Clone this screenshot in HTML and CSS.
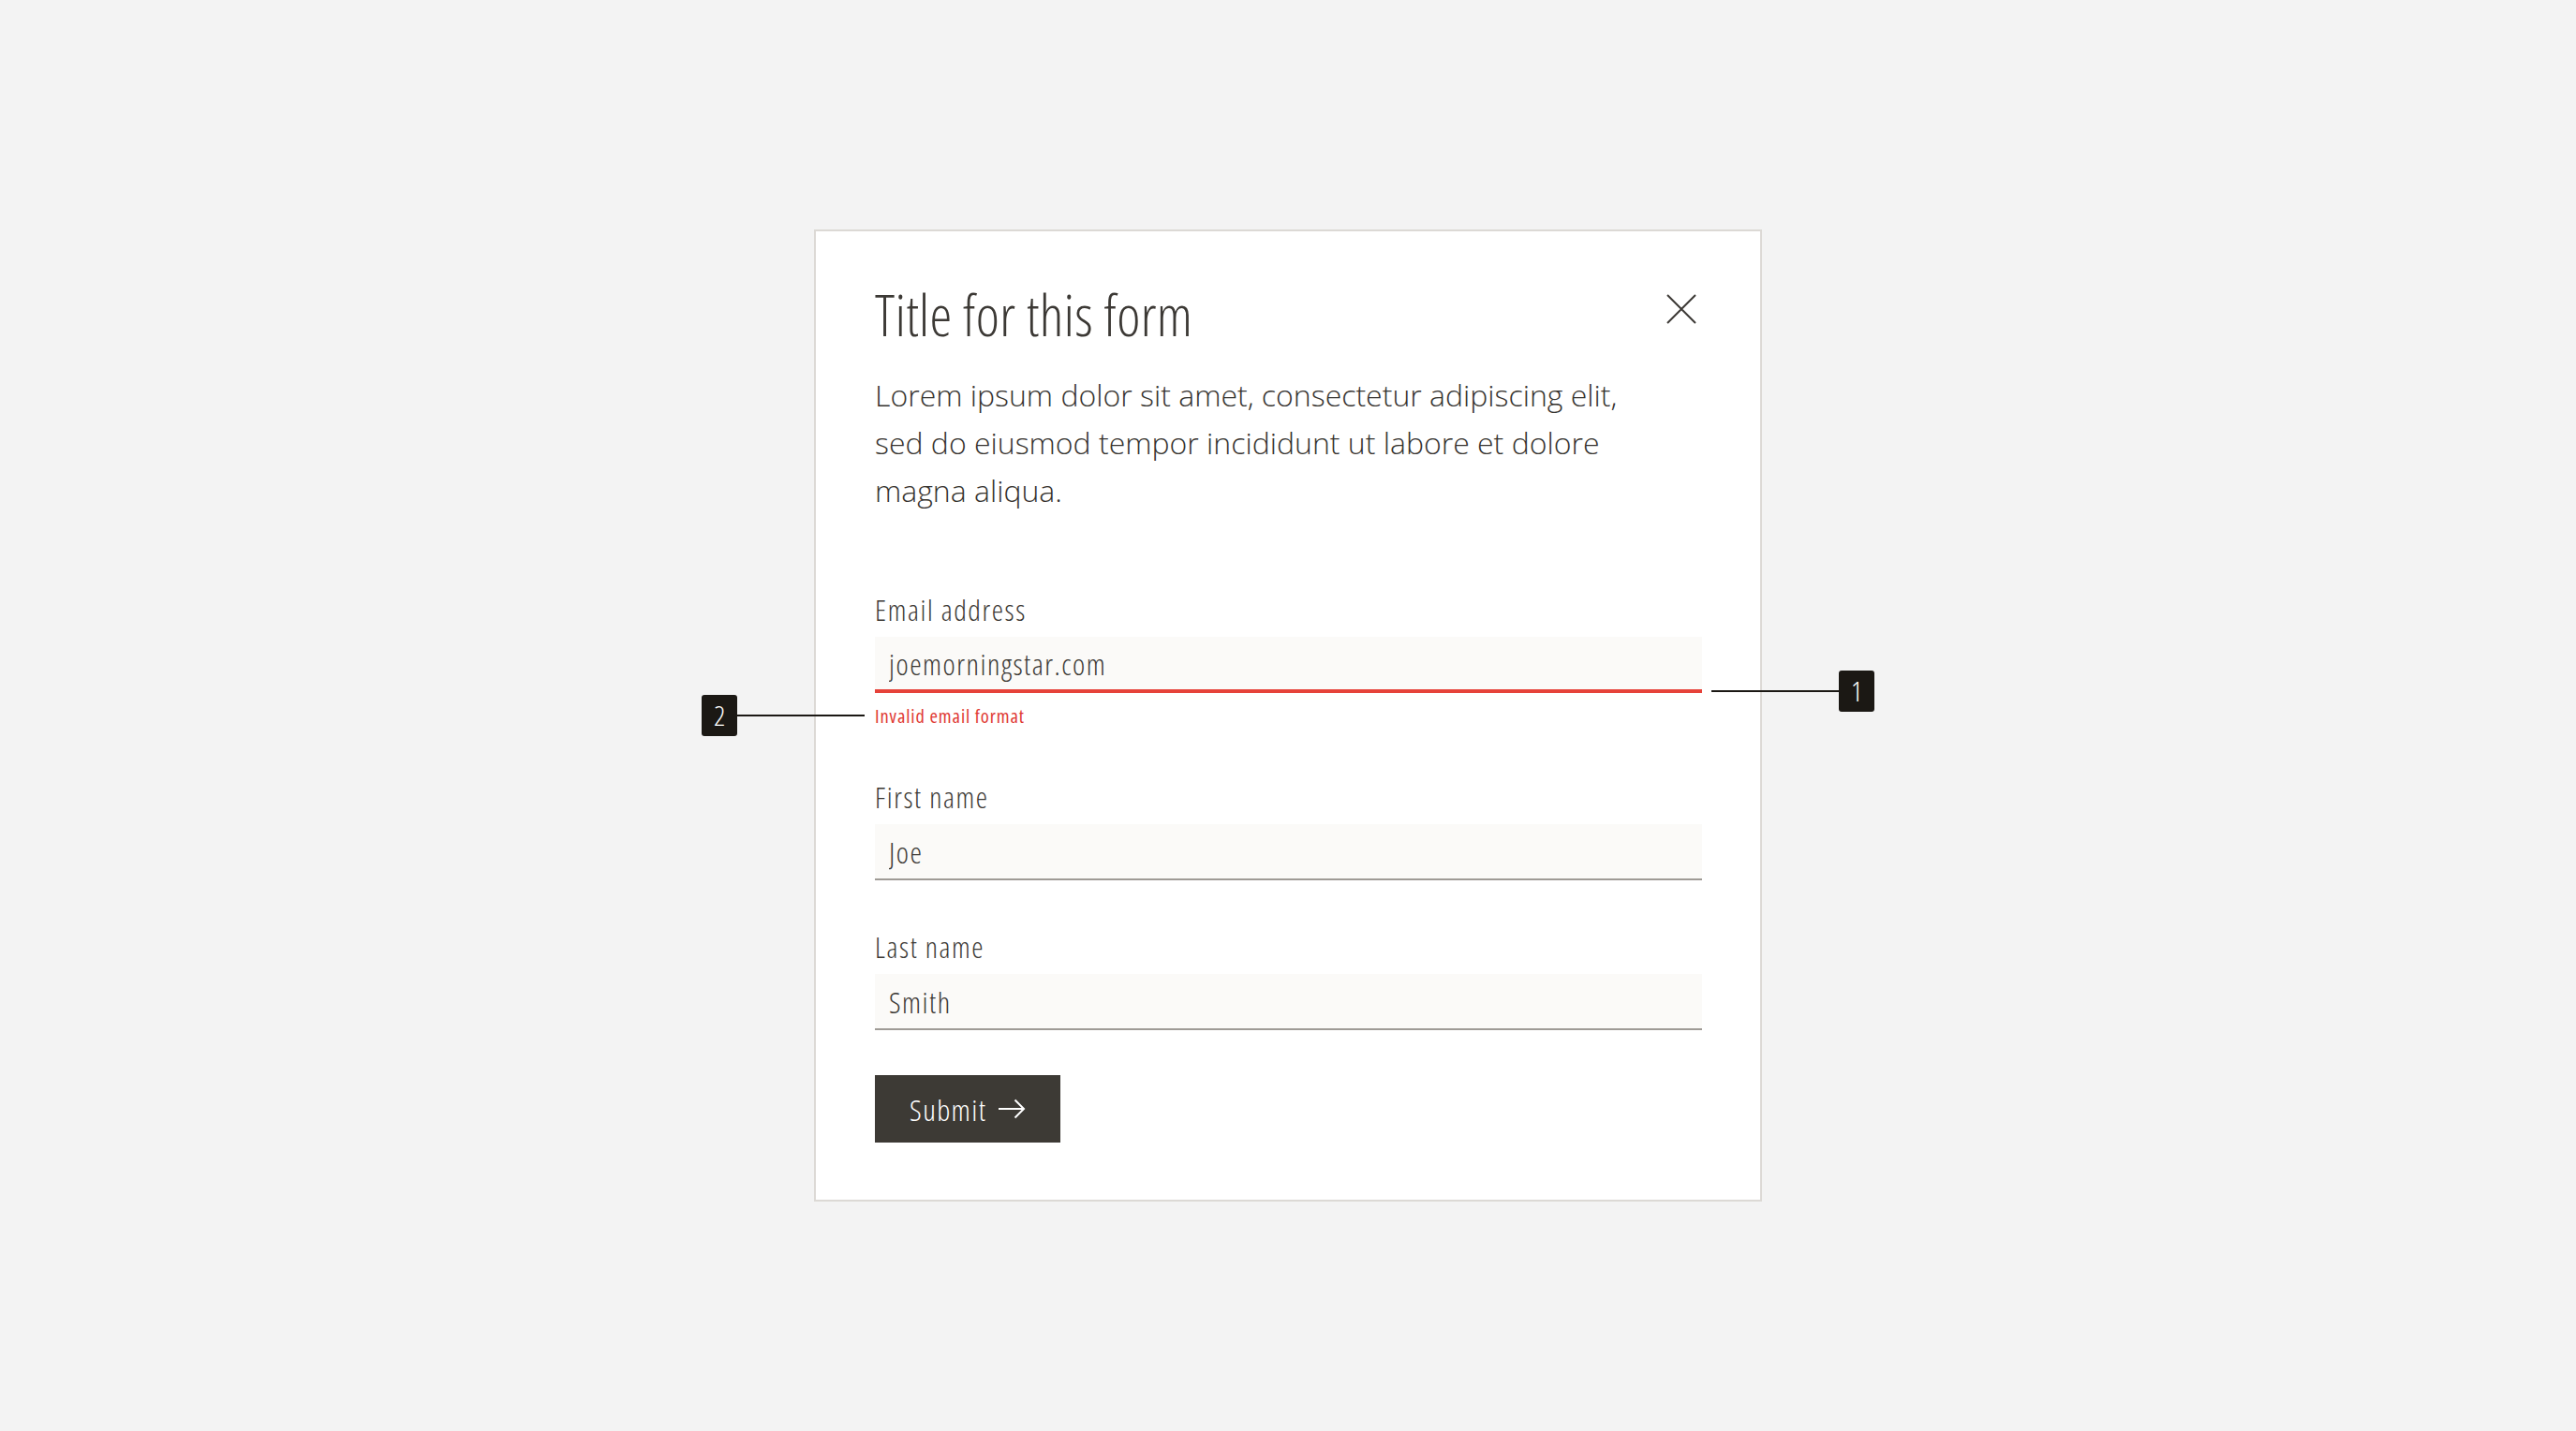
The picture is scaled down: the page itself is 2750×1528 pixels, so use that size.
FILE: index.html
```html
<!DOCTYPE html>
<html lang="en">
<head>
    <meta charset="UTF-8">
    <meta name="viewport" content="width=device-width, initial-scale=1.0">
    <title>Form with error</title>
    <link rel="stylesheet" href="styles.css">
</head>
<body>
    <div class="card">
        <div class="card-header">
            <h1 class="title">Title for this form</h1>
            <button class="close-btn" aria-label="Close">
                <svg width="32" height="32" viewBox="0 0 32 32">
                    <path d="M1 1 L31 31 M31 1 L1 31" stroke="#3c3935" stroke-width="2" fill="none"/>
                </svg>
            </button>
        </div>
        <p class="description">Lorem ipsum dolor sit amet, consectetur adipiscing elit, sed do eiusmod tempor incididunt ut labore et dolore magna aliqua.</p>

        <form class="form" onsubmit="return false">
            <div class="fields">
                <div class="field">
                    <label class="label" for="email">Email address</label>
                    <div class="input-wrap">
                        <input class="input input-error" id="email" type="text" value="joemorningstar.com">
                        <div class="marker marker-right">
                            <span class="marker-line"></span>
                            <span class="badge">1</span>
                        </div>
                    </div>
                    <div class="error-text">
                        Invalid email format
                        <div class="marker marker-left">
                            <span class="badge">2</span>
                            <span class="marker-line"></span>
                        </div>
                    </div>
                </div>
                <div class="field">
                    <label class="label" for="first">First name</label>
                    <input class="input" id="first" type="text" value="Joe">
                </div>
                <div class="field">
                    <label class="label" for="last">Last name</label>
                    <input class="input" id="last" type="text" value="Smith">
                </div>
            </div>
            <div class="actions">
                <button class="submit-btn" type="submit">
                    Submit
                    <svg width="29" height="22" viewBox="0 0 29 22">
                        <path d="M0 11 H27 M17.5 1.5 L27 11 L17.5 20.5" stroke="#ffffff" stroke-width="2" fill="none"/>
                    </svg>
                </button>
            </div>
        </form>
    </div>
</body>
</html>
```

FILE: styles.css
```css
body {
    margin: 0;
    height: 100vh;
    background-color: #f3f3f3;
    font-family: "Open Sans", "DejaVu Sans Condensed", sans-serif;
    font-weight: 300;
    font-stretch: 75%;
    color: #3c3935;
    display: flex;
    justify-content: center;
    align-items: center;
}
.card {
    width: 1012px;
    box-sizing: border-box;
    background: #ffffff;
    border: 2px solid #dcd9d5;
    padding: 61px 62px 61px 63px;
}
.card-header {
    display: flex;
    justify-content: space-between;
    align-items: flex-start;
}
.title {
    margin: 0;
    font-size: 60px;
    font-weight: 300;
    letter-spacing: 0.3px;
    line-height: 56px;
}
.close-btn {
    background: none;
    border: none;
    padding: 0;
    margin: 6px 6px 0 0;
    cursor: pointer;
    display: block;
}
.close-btn svg {
    display: block;
}
.description {
    margin: 32px 0 0;
    max-width: 815px;
    font-size: 32px;
    font-stretch: 92%;
    font-weight: 350;
    line-height: 51px;
    color: #36332f;
}
.form {
    margin-top: 82px;
}
.fields {
    display: flex;
    flex-direction: column;
    gap: 51px;
}
.field {
    display: flex;
    flex-direction: column;
}
.label {
    font-size: 31px;
    letter-spacing: 1.6px;
    line-height: 40px;
    margin-bottom: 9px;
}
.input-wrap {
    position: relative;
}
.input {
    display: block;
    width: 100%;
    height: 60px;
    box-sizing: border-box;
    border: none;
    border-bottom: 2px solid #9f9b96;
    border-radius: 0;
    background: #fbfaf8;
    padding: 0 15px;
    font-family: inherit;
    font-size: 31.5px;
    font-stretch: 75%;
    font-weight: 300;
    letter-spacing: 1.5px;
    color: #3c3935;
    outline: none;
}
.input-error {
    border-bottom: 4px solid #e6423a;
}
.error-text {
    position: relative;
    margin: 10px 0 2px;
    font-size: 20.5px;
    font-weight: 400;
    letter-spacing: 0.9px;
    line-height: 28px;
    color: #df3a34;
}
.marker {
    position: absolute;
    display: flex;
    align-items: center;
    transform: translateY(-50%);
}
.marker-right {
    top: calc(100% - 2px);
    left: calc(100% + 10px);
}
.marker-left {
    top: 50%;
    right: calc(100% + 11px);
}
.marker-line {
    display: block;
    width: 136px;
    height: 2px;
    background: #1b1814;
}
.badge {
    width: 38px;
    height: 44px;
    border-radius: 3px;
    background: #1b1814;
    color: #ffffff;
    font-size: 30px;
    font-weight: 300;
    letter-spacing: 0;
    line-height: 1;
    display: flex;
    justify-content: center;
    align-items: center;
}
.actions {
    margin-top: 48px;
}
.submit-btn {
    height: 72px;
    padding: 0 37px;
    background: #3d3a35;
    color: #ffffff;
    border: none;
    border-radius: 0;
    font-family: inherit;
    font-size: 32px;
    font-stretch: 75%;
    font-weight: 300;
    letter-spacing: 1.4px;
    display: inline-flex;
    align-items: center;
    gap: 12px;
    cursor: pointer;
}
```
